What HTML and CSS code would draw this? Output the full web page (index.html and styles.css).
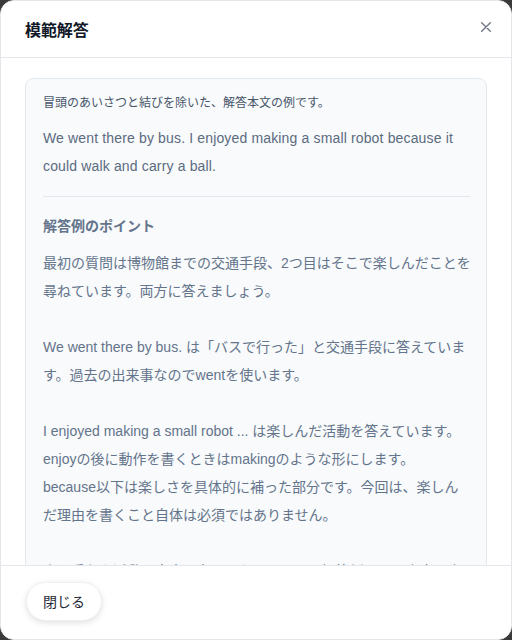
FILE: index.html
```html
<!DOCTYPE html>
<html lang="ja">
<head>
<meta charset="utf-8">
<title>模範解答</title>
<link rel="stylesheet" href="styles.css">
</head>
<body>
<div class="modal">
  <header class="modal-header">
    <h1 class="modal-title">模範解答</h1>
    <button class="close-btn" aria-label="閉じる">
      <svg width="10" height="10" viewBox="0 0 10 10"><path d="M0.7 0.7L9.3 9.3M9.3 0.7L0.7 9.3" stroke="#6b7280" stroke-width="1.3" stroke-linecap="round" fill="none"/></svg>
    </button>
  </header>
  <main class="modal-body">
    <section class="answer-card">
      <p class="intro">冒頭のあいさつと結びを除いた、解答本文の例です。</p>
      <p class="answer lines">We went there by bus. I enjoyed making a small robot because it<br>could walk and carry a ball.</p>
      <hr class="divider">
      <h2 class="points-title">解答例のポイント</h2>
      <p class="point lines">最初の質問は博物館までの交通手段、2つ目はそこで楽しんだことを<br>尋ねています。両方に答えましょう。</p>
      <p class="point lines">We went there by bus. は「バスで行った」と交通手段に答えていま<br>す。過去の出来事なのでwentを使います。</p>
      <p class="point lines">I enjoyed making a small robot ... は楽しんだ活動を答えています。<br>enjoyの後に動作を書くときはmakingのような形にします。<br>because以下は楽しさを具体的に補った部分です。今回は、楽しん<br>だ理由を書くこと自体は必須ではありません。</p>
      <p class="point lines">交通手段や活動は自由に考えられます。この解答例と同じ内容を書<br>く必要はありません。</p>
    </section>
  </main>
  <footer class="modal-footer">
    <button class="btn-close">閉じる</button>
  </footer>
</div>
</body>
</html>
```

FILE: styles.css
```css
* { box-sizing: border-box; }
html, body {
  margin: 0;
  padding: 0;
  height: 100%;
}
body {
  background: #3a3a3a;
  font-family: "Liberation Sans", "Noto Sans CJK JP", sans-serif;
}
.modal {
  width: 512px;
  height: 640px;
  background: #ffffff;
  border: 1px solid #e3e7ec;
  border-radius: 14px;
  display: flex;
  flex-direction: column;
  overflow: hidden;
}
.modal-header {
  height: 57px;
  flex: 0 0 57px;
  display: flex;
  align-items: center;
  justify-content: space-between;
  padding: 0 18px 0 24px;
  border-bottom: 1px solid #e3e7ec;
}
.modal-title {
  margin: 0;
  font-size: 16px;
  font-weight: 700;
  color: #111827;
  letter-spacing: -0.1px;
}
.close-btn {
  background: none;
  border: none;
  padding: 0;
  width: 14px;
  height: 14px;
  display: flex;
  align-items: center;
  justify-content: center;
  cursor: pointer;
  margin-top: -4px;
}
.modal-body {
  flex: 1;
  overflow: hidden;
  padding: 20px 24px 0;
}
.answer-card {
  background: #f8fafc;
  border: 1px solid #e2e8f0;
  border-radius: 8px;
  padding: 14px 16px 20px 17px;
  color: #64748b;
}
.lines { white-space: nowrap; }
.intro {
  margin: 0;
  font-size: 12px;
  line-height: 20px;
  color: #475569;
}
.answer {
  margin: 11px 0 0;
  font-size: 14px;
  line-height: 28px;
  color: #5b6b80;
  letter-spacing: 0.15px;
}
.divider {
  border: none;
  border-top: 1px solid #e2e8f0;
  margin: 16px 0 0;
}
.points-title {
  margin: 17px 0 0;
  font-size: 14px;
  line-height: 24px;
  font-weight: 700;
  color: #64748b;
}
.point {
  margin: 28px 0 0;
  font-size: 14px;
  line-height: 28px;
  color: #64748b;
}
.points-title + .point { margin-top: 11px; }
.modal-footer {
  flex: 0 0 74px;
  border-top: 1px solid #e3e7ec;
  padding: 16px 24px 0 25px;
}
.btn-close {
  height: 39px;
  padding: 0 16px;
  border-radius: 20px;
  border: 1px solid #eef0f3;
  background: #ffffff;
  box-shadow: 0 2px 6px rgba(0,0,0,0.12);
  font-family: "Liberation Sans", "Noto Sans CJK JP", sans-serif;
  font-size: 14px;
  line-height: 20px;
  color: #1f2937;
  cursor: pointer;
}
```
